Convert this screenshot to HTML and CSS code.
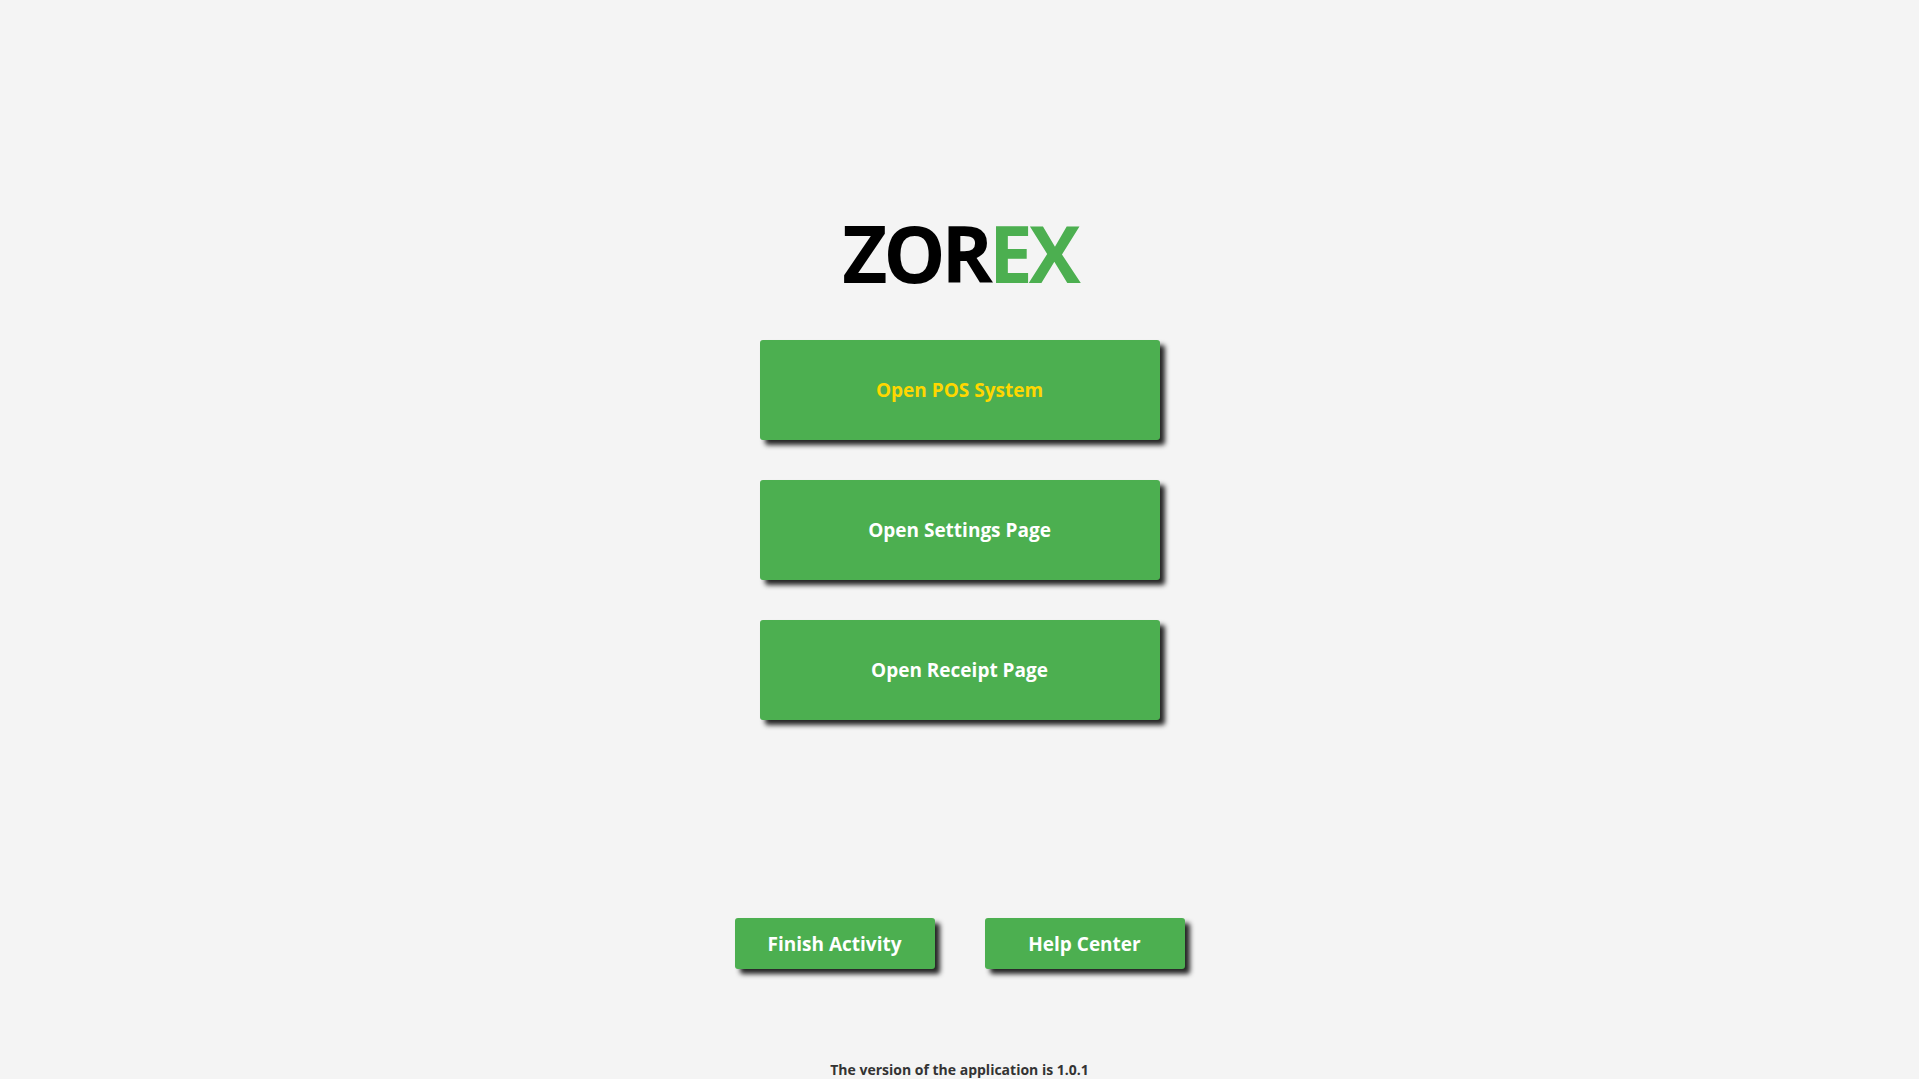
FILE: index.html
```html
<!DOCTYPE html>
<html lang="en">
<head>
<meta charset="utf-8">
<title>ZOREX</title>
<link rel="stylesheet" href="styles.css">
</head>
<body>
<div class="page">
  <h1 class="logo">ZOR<span class="logo-accent">EX</span></h1>
  <div class="main-actions">
    <button class="btn btn-large btn-highlight">Open POS System</button>
    <button class="btn btn-large">Open Settings Page</button>
    <button class="btn btn-large">Open Receipt Page</button>
  </div>
  <div class="secondary-actions">
    <button class="btn btn-small">Finish Activity</button>
    <button class="btn btn-small">Help Center</button>
  </div>
  <p class="version">The version of the application is 1.0.1</p>
</div>
</body>
</html>
```

FILE: styles.css
```css
* { box-sizing: border-box; }
html, body {
  margin: 0;
  padding: 0;
  background: #f4f4f4;
}
body {
  font-family: "Open Sans", "Noto Sans", "Liberation Sans", sans-serif;
}
.page {
  height: 1079px;
  display: flex;
  flex-direction: column;
  align-items: center;
  overflow: hidden;
}
.logo {
  margin: 214px 0 0 0;
  font-size: 78px;
  line-height: 78px;
  font-weight: 700;
  letter-spacing: -4px;
  color: #000;
}
.logo-accent { color: #4caf50; }
.main-actions {
  margin-top: 48px;
  display: flex;
  flex-direction: column;
  gap: 40px;
}
.btn {
  border: none;
  background: #4caf50;
  color: #fff;
  font-family: inherit;
  font-weight: 700;
  border-radius: 3px;
  box-shadow: 5px 5px 5px rgba(0,0,0,0.85);
  cursor: pointer;
  padding: 0;
}
.btn-large {
  width: 400px;
  height: 100px;
  font-size: 19px;
}
.btn-highlight { color: #ffd700; }
.secondary-actions {
  margin-top: 198px;
  display: flex;
  gap: 50px;
}
.btn-small {
  width: 200px;
  height: 51px;
  font-size: 19px;
}
.version {
  margin: auto 0 0 0;
  padding-bottom: 0;
  font-size: 14px;
  line-height: 18px;
  font-weight: 700;
  color: #333;
}
```
